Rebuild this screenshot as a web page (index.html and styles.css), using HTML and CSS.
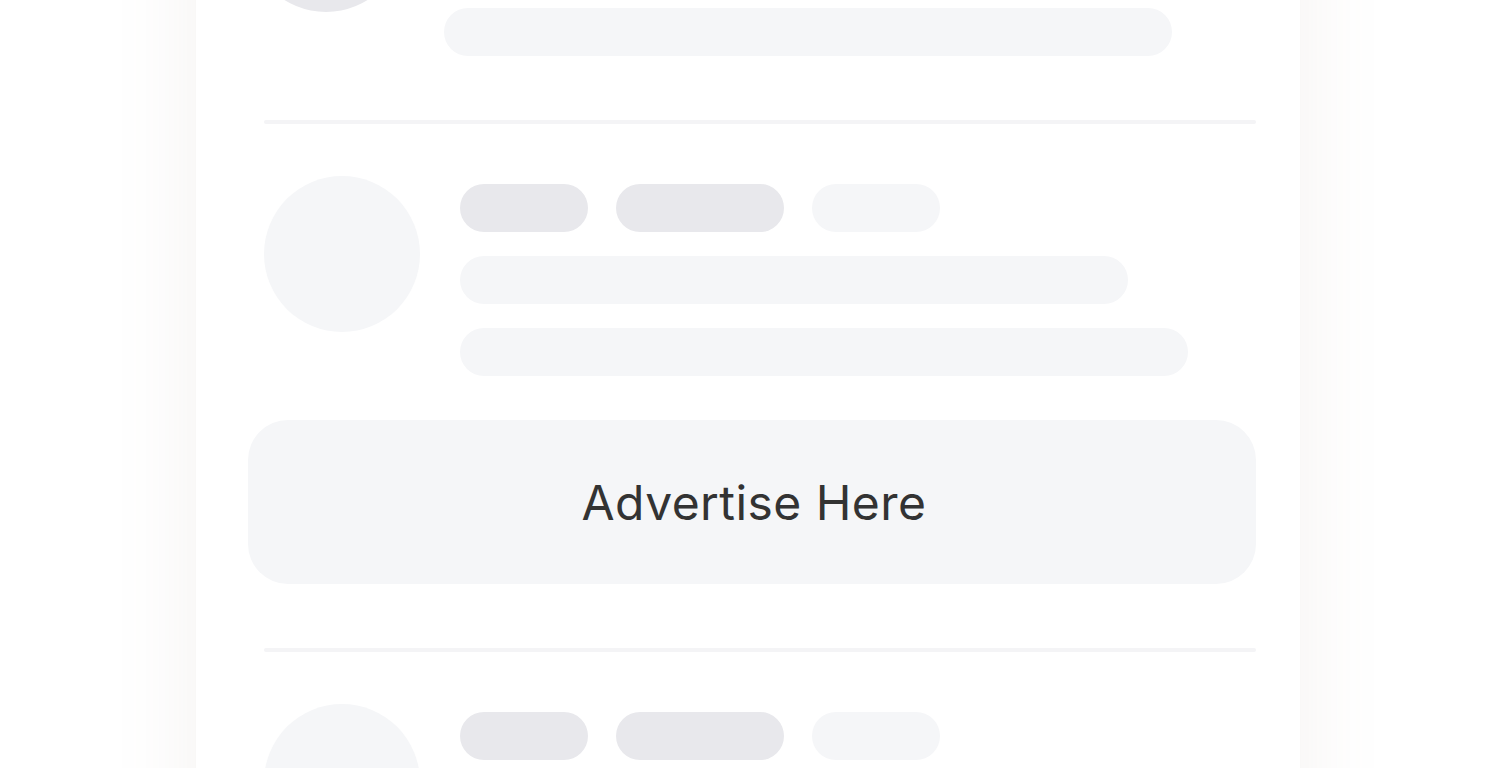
FILE: index.html
```html
<!DOCTYPE html>
<html lang="en">
<head>
<meta charset="utf-8">
<title>Feed</title>
<link rel="stylesheet" href="styles.css">
</head>
<body>
<div class="page">
  <main class="card">
    <div class="item item--shifted">
      <div class="avatar avatar--dark"></div>
      <div class="lines">
        <div class="tags">
          <span class="pill pill--dark pill--sm"></span>
          <span class="pill pill--dark pill--md"></span>
          <span class="pill pill--sm"></span>
        </div>
        <div class="bar bar--short"></div>
        <div class="bar bar--long"></div>
      </div>
    </div>
    <hr class="divider">
    <div class="item">
      <div class="avatar"></div>
      <div class="lines">
        <div class="tags">
          <span class="pill pill--dark pill--sm"></span>
          <span class="pill pill--dark pill--md"></span>
          <span class="pill pill--sm"></span>
        </div>
        <div class="bar bar--short"></div>
        <div class="bar bar--long"></div>
      </div>
    </div>
    <div class="ad">Advertise Here</div>
    <hr class="divider">
    <div class="item">
      <div class="avatar"></div>
      <div class="lines">
        <div class="tags">
          <span class="pill pill--dark pill--sm"></span>
          <span class="pill pill--dark pill--md"></span>
          <span class="pill pill--sm"></span>
        </div>
        <div class="bar bar--short"></div>
        <div class="bar bar--long"></div>
      </div>
    </div>
  </main>
</div>
</body>
</html>
```

FILE: styles.css
```css
html, body {
  margin: 0;
  padding: 0;
  background: #ffffff;
  height: 100%;
  overflow: hidden;
}

.page {
  height: 768px;
  overflow: hidden;
}

.card {
  margin: -144px 0 0 196px;
  width: 1104px;
  box-sizing: border-box;
  padding: 0 44px 0 68px;
  background: #ffffff;
  box-shadow: 0 0 80px rgba(150, 130, 110, 0.10);
  min-height: 1100px;
}

.item {
  display: flex;
  gap: 40px;
  align-items: flex-start;
}

.item--shifted {
  margin-left: -16px;
}

.avatar {
  flex: none;
  width: 156px;
  height: 156px;
  border-radius: 50%;
  background: #f5f6f8;
}

.avatar--dark {
  background: #e8e8ec;
}

.lines {
  display: flex;
  flex-direction: column;
  gap: 24px;
  padding-top: 8px;
}

.tags {
  display: flex;
  gap: 28px;
}

.pill {
  display: block;
  height: 48px;
  border-radius: 24px;
  background: #f5f6f8;
}

.pill--dark {
  background: #e8e8ec;
}

.pill--sm {
  width: 128px;
}

.pill--md {
  width: 168px;
}

.bar {
  height: 48px;
  border-radius: 24px;
  background: #f5f6f8;
}

.bar--short {
  width: 668px;
}

.bar--long {
  width: 728px;
}

.divider {
  border: 0;
  margin: 64px 0 52px;
  height: 4px;
  border-radius: 2px;
  background: #f4f4f6;
}

.ad {
  margin: 44px 0 0 -16px;
  height: 164px;
  border-radius: 40px;
  background: #f5f6f8;
  display: flex;
  align-items: center;
  justify-content: center;
  font-family: "Inter", "Noto Sans", sans-serif;
  font-size: 48px;
  color: #333333;
  letter-spacing: 0.45px;
  padding-left: 4px;
}
```
